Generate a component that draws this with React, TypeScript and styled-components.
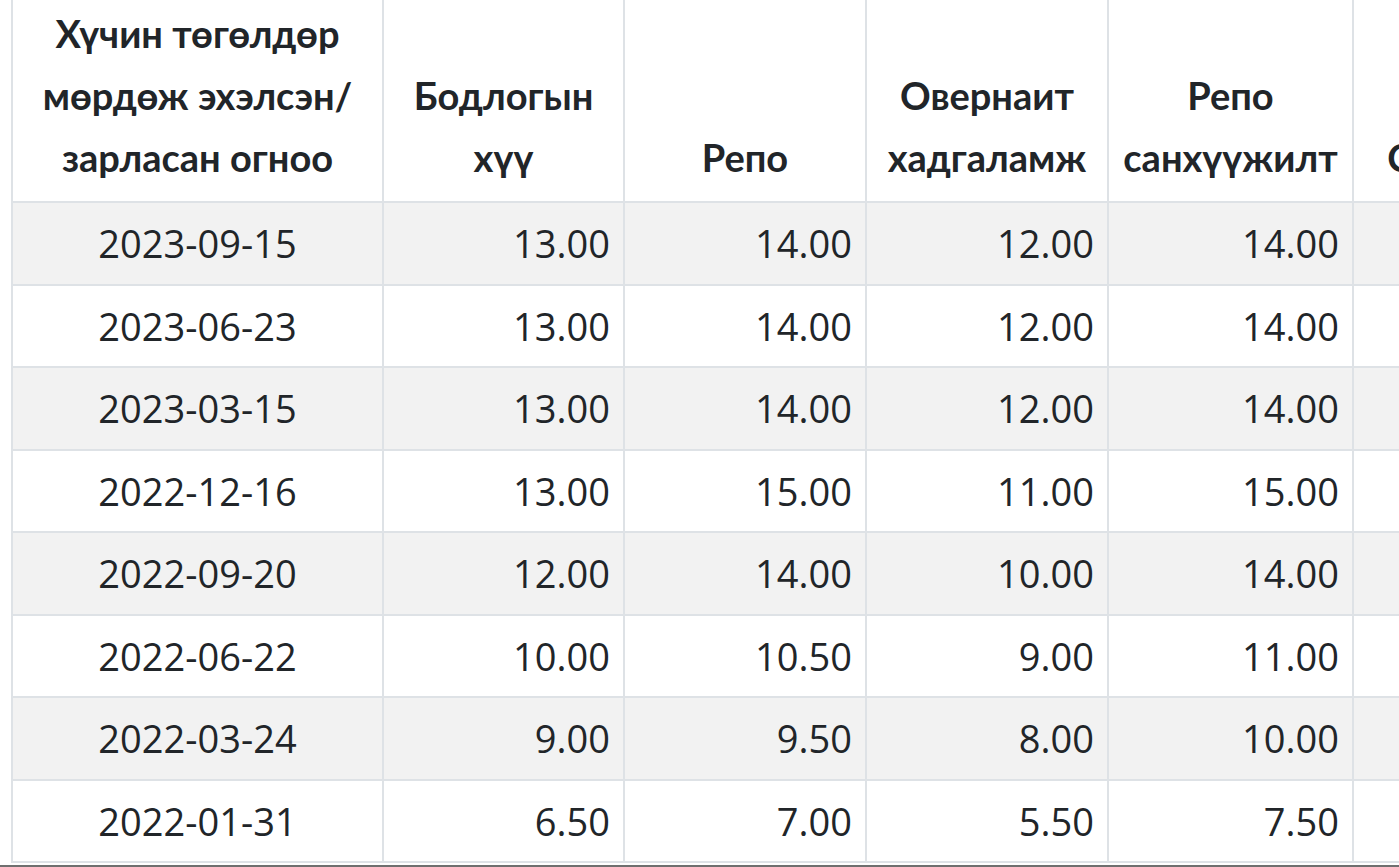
import styled, { createGlobalStyle } from 'styled-components';

const GlobalStyle = createGlobalStyle`
  html, body {
    margin: 0;
    padding: 0;
    background: #fff;
  }
  body {
    font-family: "Open Sans", "Noto Sans", sans-serif;
    color: #212529;
  }
`;

const Page = styled.div`
  width: 1399px;
  height: 867px;
  box-sizing: border-box;
  overflow: hidden;
  padding-left: 11px;
  border-bottom: 2px solid #6f6f6f;
`;

const Table = styled.table`
  border-collapse: collapse;
  table-layout: fixed;
  width: 1631px;
  font-size: 38px;
`;

const HeadCell = styled.th`
  border: 2px solid #dee2e6;
  border-top: none;
  padding: 2px 13px 13px;
  font-family: Lato, "Open Sans", sans-serif;
  font-size: 38px;
  line-height: 62px;
  font-weight: 700;
  text-align: center;
  vertical-align: bottom;
  color: #212529;
`;

const Row = styled.tr<{ $striped: boolean }>`
  background: ${p => (p.$striped ? '#f2f2f2' : '#fff')};
`;

const Cell = styled.td<{ $align: 'center' | 'right' }>`
  border: 2px solid #dee2e6;
  padding: 10px 13px;
  line-height: 60.5px;
  text-align: ${p => p.$align};
  vertical-align: middle;
  white-space: nowrap;
`;

const columns = [
  { title: 'Хүчин төгөлдөр мөрдөж эхэлсэн/ зарласан огноо', width: 371 },
  { title: 'Бодлогын хүү', width: 241 },
  { title: 'Репо', width: 242 },
  { title: 'Овернаит хадгаламж', width: 242 },
  { title: 'Репо санхүүжилт', width: 245 },
  { title: 'Санхүүжилт', width: 290 },
];

const rows = [
  ['2023-09-15', '13.00', '14.00', '12.00', '14.00', ''],
  ['2023-06-23', '13.00', '14.00', '12.00', '14.00', ''],
  ['2023-03-15', '13.00', '14.00', '12.00', '14.00', ''],
  ['2022-12-16', '13.00', '15.00', '11.00', '15.00', ''],
  ['2022-09-20', '12.00', '14.00', '10.00', '14.00', ''],
  ['2022-06-22', '10.00', '10.50', '9.00', '11.00', ''],
  ['2022-03-24', '9.00', '9.50', '8.00', '10.00', ''],
  ['2022-01-31', '6.50', '7.00', '5.50', '7.50', ''],
];

const App = () => {
  return (
    <>
      <GlobalStyle />
      <Page>
        <Table>
          <colgroup>
            {columns.map(col => (
              <col key={col.title} style={{ width: col.width }} />
            ))}
          </colgroup>
          <thead>
            <tr>
              {columns.map(col => (
                <HeadCell key={col.title}>{col.title}</HeadCell>
              ))}
            </tr>
          </thead>
          <tbody>
            {rows.map((row, i) => (
              <Row key={row[0]} $striped={i % 2 === 0}>
                {row.map((value, j) => (
                  <Cell key={j} $align={j === 0 ? 'center' : 'right'}>
                    {value}
                  </Cell>
                ))}
              </Row>
            ))}
          </tbody>
        </Table>
      </Page>
    </>
  );
};

export default App;
